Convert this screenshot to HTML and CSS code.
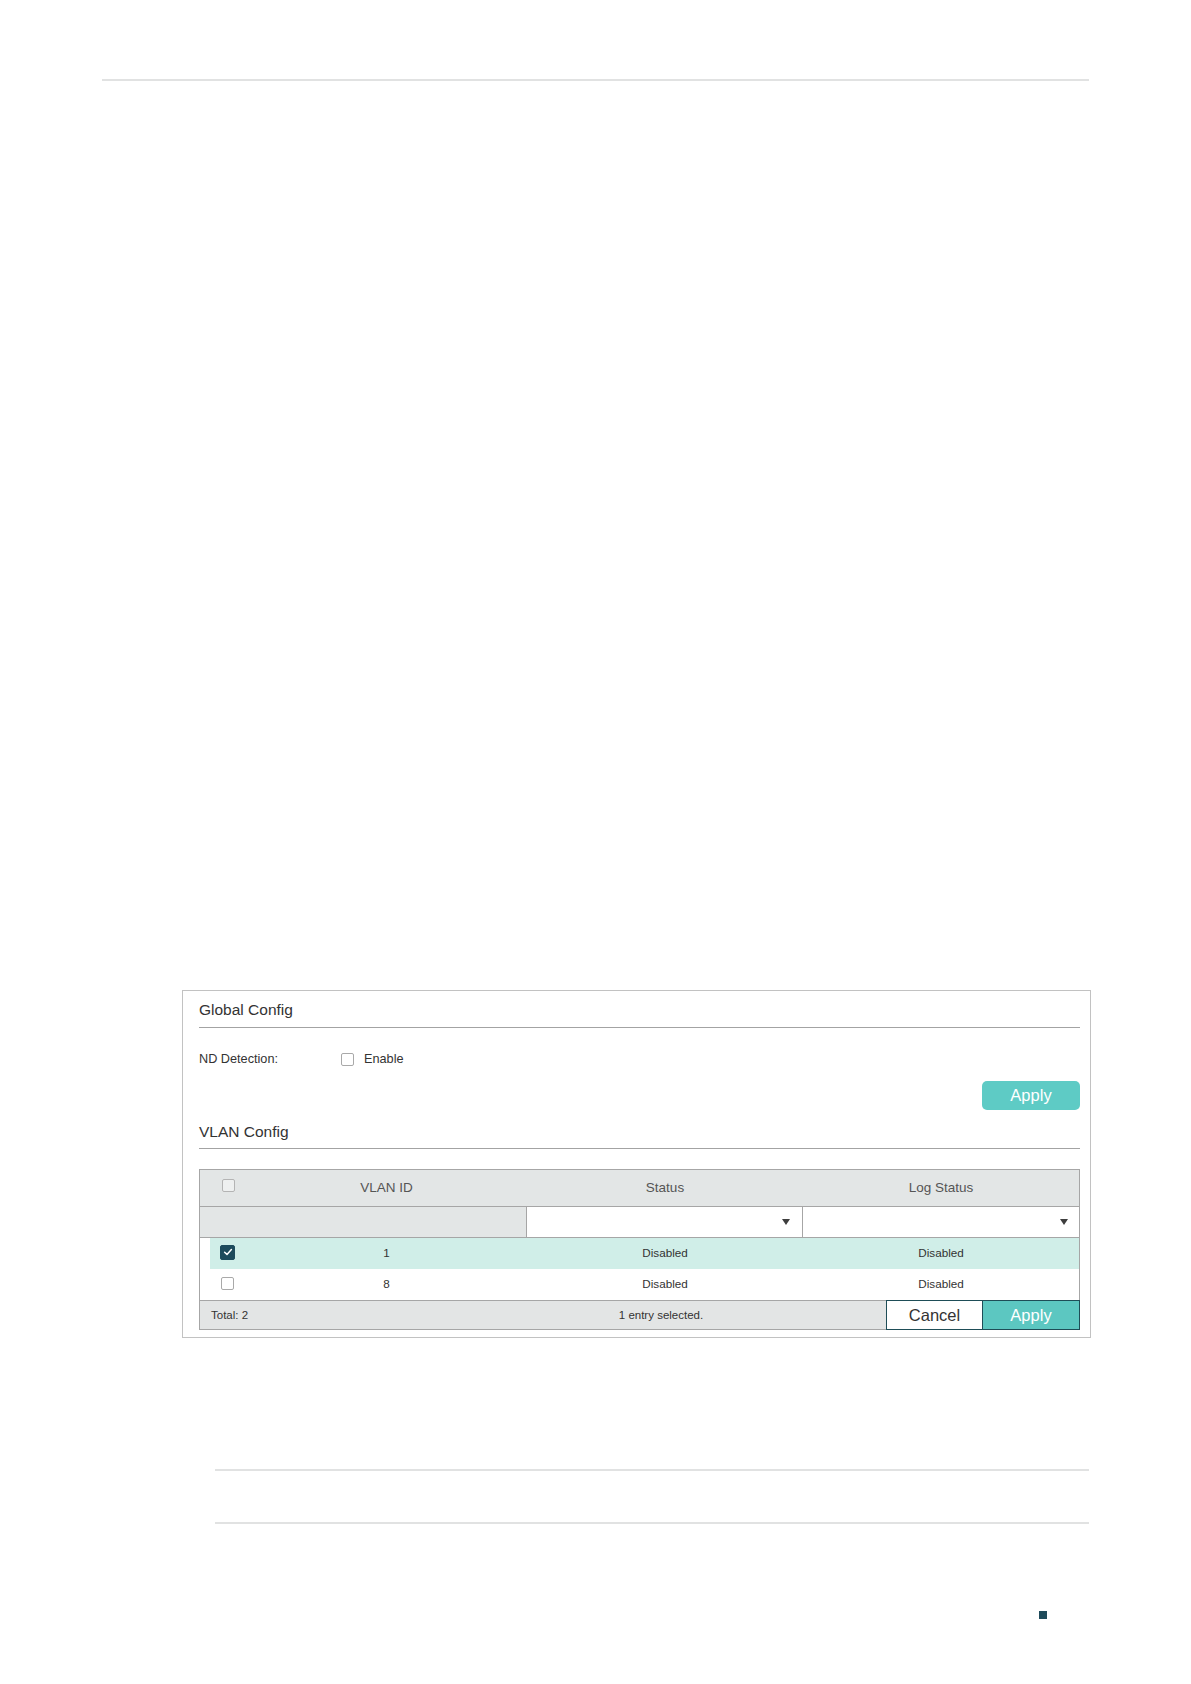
FILE: index.html
```html
<!DOCTYPE html>
<html>
<head>
<meta charset="utf-8">
<link rel="stylesheet" href="styles.css">
</head>
<body>
<div class="page">
  <div class="rule rule-top"></div>

  <div class="panel">
    <div class="section-title">Global Config</div>
    <div class="field-row">
      <span class="field-label">ND Detection:</span>
      <span class="cb"></span>
      <span class="cb-text">Enable</span>
    </div>
    <div class="apply-row">
      <button class="btn-apply">Apply</button>
    </div>

    <div class="section-title section-title-2">VLAN Config</div>

    <div class="table">
      <div class="thead">
        <div class="cell cell-cb"><span class="cb cb-head"></span></div>
        <div class="cell">VLAN ID</div>
        <div class="cell">Status</div>
        <div class="cell">Log Status</div>
      </div>
      <div class="filter">
        <div class="filter-blank"></div>
        <div class="filter-select"><span class="caret"></span></div>
        <div class="filter-select filter-last"><span class="caret"></span></div>
      </div>
      <div class="rows">
        <div class="trow selected">
          <div class="cell cell-cb"><span class="cb cb-checked"><svg width="10" height="10" viewBox="0 0 10 10"><polyline points="1.6,5.2 4,7.4 8.4,2.6" fill="none" stroke="#fff" stroke-width="1.5" stroke-linecap="round" stroke-linejoin="round"/></svg></span></div>
          <div class="cell">1</div>
          <div class="cell">Disabled</div>
          <div class="cell">Disabled</div>
        </div>
        <div class="trow">
          <div class="cell cell-cb"><span class="cb"></span></div>
          <div class="cell">8</div>
          <div class="cell">Disabled</div>
          <div class="cell">Disabled</div>
        </div>
      </div>
    </div>
    <div class="tfoot">
      <div class="tfoot-info">
        <span class="total">Total: 2</span>
        <span class="selected-count">1 entry selected.</span>
      </div>
      <button class="btn-cancel">Cancel</button>
      <button class="btn-apply2">Apply</button>
    </div>
  </div>

  <div class="rule rule-b1"></div>
  <div class="rule rule-b2"></div>
  <div class="square"></div>
</div>
</body>
</html>
```
FILE: styles.css
```css
* { box-sizing: border-box; }
html, body { margin: 0; padding: 0; background: #fff; }
body { font-family: "Liberation Sans", Arial, sans-serif; color: #333; }
.page { width: 1191px; min-height: 1684px; padding-top: 79px; overflow: hidden; }

.rule { height: 2px; background: #e1e2e2; }
.rule-top { margin-left: 102px; width: 987px; }
.rule-b1 { margin-top: 131px; margin-left: 215px; width: 874px; }
.rule-b2 { margin-top: 51px; margin-left: 215px; width: 874px; }
.square { margin-top: 87px; margin-left: 1039px; width: 8px; height: 8px; background: #1f4b5b; }

.panel {
  margin-top: 909px;
  margin-left: 182px;
  width: 909px;
  border: 1px solid #c2c2c2;
  padding: 0 10px 7px 16px;
}

.section-title {
  font-size: 15.5px;
  line-height: 20px;
  color: #333;
  padding: 9px 0 7px 0;
  border-bottom: 1px solid #a3a3a3;
}
.section-title-2 { padding: 12px 0 6px 0; }

.field-row {
  margin-top: 19px;
  height: 24px;
  display: flex;
  align-items: center;
  font-size: 12.7px;
}
.field-label { width: 142px; }
.cb-text { margin-left: 10px; }

.cb {
  display: inline-block;
  width: 13px;
  height: 13px;
  border: 1px solid #a9a9a9;
  border-radius: 2px;
  background: #fff;
}
.cb-head { background: #eef0f0; border-color: #b4b4b4; }
.cb-checked {
  width: 15px;
  height: 15px;
  background: #1d4b5c;
  border-color: #1d4b5c;
  display: inline-flex;
  align-items: center;
  justify-content: center;
}

.apply-row { margin-top: 10px; display: flex; justify-content: flex-end; }
.btn-apply {
  width: 98px;
  height: 29px;
  border: none;
  border-radius: 5px;
  background: #5ecbc5;
  color: #fff;
  font-family: "Liberation Sans", Arial, sans-serif;
  font-size: 16.5px;
  padding: 0;
}

.table {
  margin-top: 20px;
  width: 881px;
  border: 1px solid #a6a6a6;
  border-bottom: none;
}
.thead, .trow {
  display: grid;
  grid-template-columns: 46px 281px 276px 276px;
  align-items: center;
}
.thead {
  height: 37px;
  background: #e3e6e6;
  border-bottom: 1px solid #a6a6a6;
  font-size: 13.5px;
  color: #555;
  padding-bottom: 1px;
}
.cell { text-align: center; }
.cell-cb { text-align: left; padding-left: 22px; display: flex; align-items: center; }
.thead .cell-cb { padding-bottom: 4px; }

.filter {
  display: grid;
  grid-template-columns: 327px 276px 276px;
  height: 31px;
  border-bottom: 1px solid #a6a6a6;
}
.filter-blank { background: #e3e6e6; border-right: 1px solid #a6a6a6; }
.filter-select {
  background: #fff;
  border-right: 1px solid #a6a6a6;
  display: flex;
  align-items: center;
  justify-content: flex-end;
  padding-right: 12px;
}
.filter-last { border-right: none; padding-right: 11px; }
.caret {
  width: 0; height: 0;
  border-left: 4.5px solid transparent;
  border-right: 4.5px solid transparent;
  border-top: 6px solid #3e3e3e;
}

.rows { padding-left: 10px; }
.trow {
  grid-template-columns: 36px 281px 276px 276px;
  height: 31px;
  font-size: 11.7px;
  color: #333;
  padding-bottom: 2px;
}
.trow .cell-cb { padding-left: 11px; }
.trow.selected { background: #d0eee8; padding-bottom: 3px; }
.trow.selected .cell-cb { padding-left: 10px; }

.tfoot {
  display: flex;
  width: 881px;
  height: 30px;
}
.tfoot-info {
  width: 687px;
  display: flex;
  align-items: center;
  background: #e3e5e5;
  border: 1px solid #a6a6a6;
  border-right: none;
  font-size: 11.5px;
  color: #333;
}
.total { width: 236px; padding-left: 11px; }
.selected-count { flex: 1; text-align: center; }
.btn-cancel, .btn-apply2 {
  width: 97px;
  height: 30px;
  padding: 0;
  border: 1px solid #1e4d57;
  font-family: "Liberation Sans", Arial, sans-serif;
  font-size: 16.5px;
}
.btn-cancel { background: #fff; color: #333; }
.btn-apply2 { background: #5cc7c1; color: #fff; border-left: none; }
```
